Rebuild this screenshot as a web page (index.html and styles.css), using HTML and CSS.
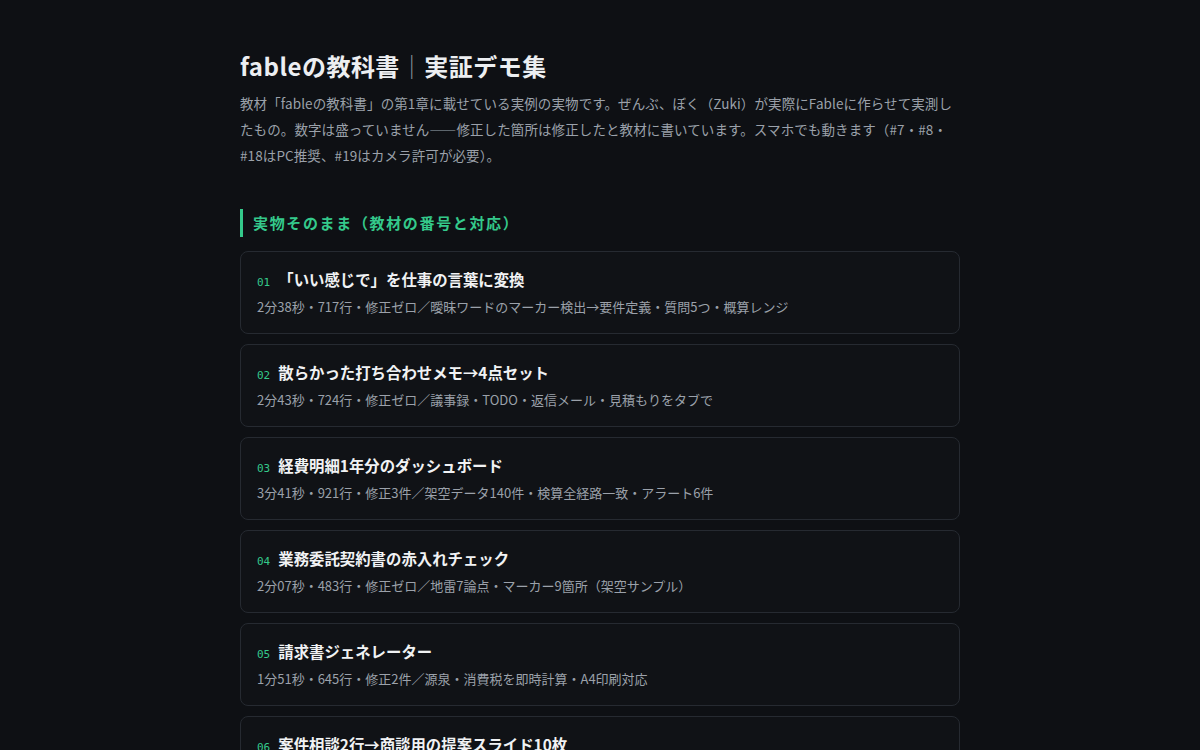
FILE: index.html
```html
<!DOCTYPE html>
<html lang="ja">
<head>
    <meta charset="UTF-8">
    <meta name="viewport" content="width=device-width, initial-scale=1.0">
    <title>fableの教科書｜実証デモ集</title>
    <link rel="stylesheet" href="styles.css">
</head>
<body>
    <div class="container">
        <h1>fableの教科書<span class="sep">｜</span>実証デモ集</h1>
        <p class="lead">教材「fableの教科書」の第1章に載せている実例の実物です。ぜんぶ、ぼく（Zuki）が実際にFableに作らせて実測したもの。数字は盛っていません——修正した箇所は修正したと教材に書いています。スマホでも動きます（#7・#8・#18はPC推奨、#19はカメラ許可が必要）。</p>

        <h2 class="section-title">実物そのまま（教材の番号と対応）</h2>

        <div class="demo-list">
            <a class="demo-card" href="#">
                <div class="demo-title"><span class="num">01</span>「いい感じで」を仕事の言葉に変換</div>
                <div class="demo-meta">2分38秒・717行・修正ゼロ／曖昧ワードのマーカー検出→要件定義・質問5つ・概算レンジ</div>
            </a>
            <a class="demo-card" href="#">
                <div class="demo-title"><span class="num">02</span>散らかった打ち合わせメモ→4点セット</div>
                <div class="demo-meta">2分43秒・724行・修正ゼロ／議事録・TODO・返信メール・見積もりをタブで</div>
            </a>
            <a class="demo-card" href="#">
                <div class="demo-title"><span class="num">03</span>経費明細1年分のダッシュボード</div>
                <div class="demo-meta">3分41秒・921行・修正3件／架空データ140件・検算全経路一致・アラート6件</div>
            </a>
            <a class="demo-card" href="#">
                <div class="demo-title"><span class="num">04</span>業務委託契約書の赤入れチェック</div>
                <div class="demo-meta">2分07秒・483行・修正ゼロ／地雷7論点・マーカー9箇所（架空サンプル）</div>
            </a>
            <a class="demo-card" href="#">
                <div class="demo-title"><span class="num">05</span>請求書ジェネレーター</div>
                <div class="demo-meta">1分51秒・645行・修正2件／源泉・消費税を即時計算・A4印刷対応</div>
            </a>
            <a class="demo-card" href="#">
                <div class="demo-title"><span class="num">06</span>案件相談2行→商談用の提案スライド10枚</div>
                <div class="demo-meta">2分12秒・538行・修正ゼロ／表紙・課題・提案・スケジュール・費用まで</div>
            </a>
        </div>
    </div>
</body>
</html>
```

FILE: styles.css
```css
body {
    font-family: "Noto Sans CJK JP", "Noto Sans", sans-serif;
    margin: 0;
    padding: 0;
    background-color: #0e1014;
    color: #e6e8eb;
}
.container {
    width: 720px;
    margin: 0 auto;
    padding: 49px 0 40px;
}
h1 {
    font-size: 24px;
    font-weight: 700;
    line-height: 34px;
    letter-spacing: 0.02em;
    margin: 0 0 7px;
    color: #eceef1;
}
h1 .sep {
    color: #8a9099;
    font-weight: 400;
}
.lead {
    font-size: 13.5px;
    line-height: 26px;
    letter-spacing: 0.1px;
    color: #9ba1aa;
    margin: 0;
}
.section-title {
    margin: 41px 0 14px;
    padding-left: 10px;
    border-left: 3px solid #34c98b;
    font-size: 15px;
    line-height: 28px;
    font-weight: 700;
    letter-spacing: 0.11em;
    color: #34c98b;
}
.demo-list {
    display: flex;
    flex-direction: column;
    gap: 10px;
}
.demo-card {
    display: block;
    padding: 16px;
    border: 1px solid #262a31;
    border-radius: 8px;
    background-color: #101216;
    text-decoration: none;
}
.demo-title {
    display: flex;
    align-items: baseline;
    gap: 8px;
    height: 22px;
    font-size: 15.4px;
    line-height: 22px;
    font-weight: 700;
    color: #f1f2f4;
    margin-bottom: 7px;
}
.num {
    font-family: "DejaVu Sans Mono", "Liberation Mono", monospace;
    font-size: 11px;
    line-height: 1;
    font-weight: 400;
    color: #34c98b;
}
.demo-meta {
    height: 20px;
    font-size: 13px;
    line-height: 20px;
    color: #9ba1aa;
}
```
